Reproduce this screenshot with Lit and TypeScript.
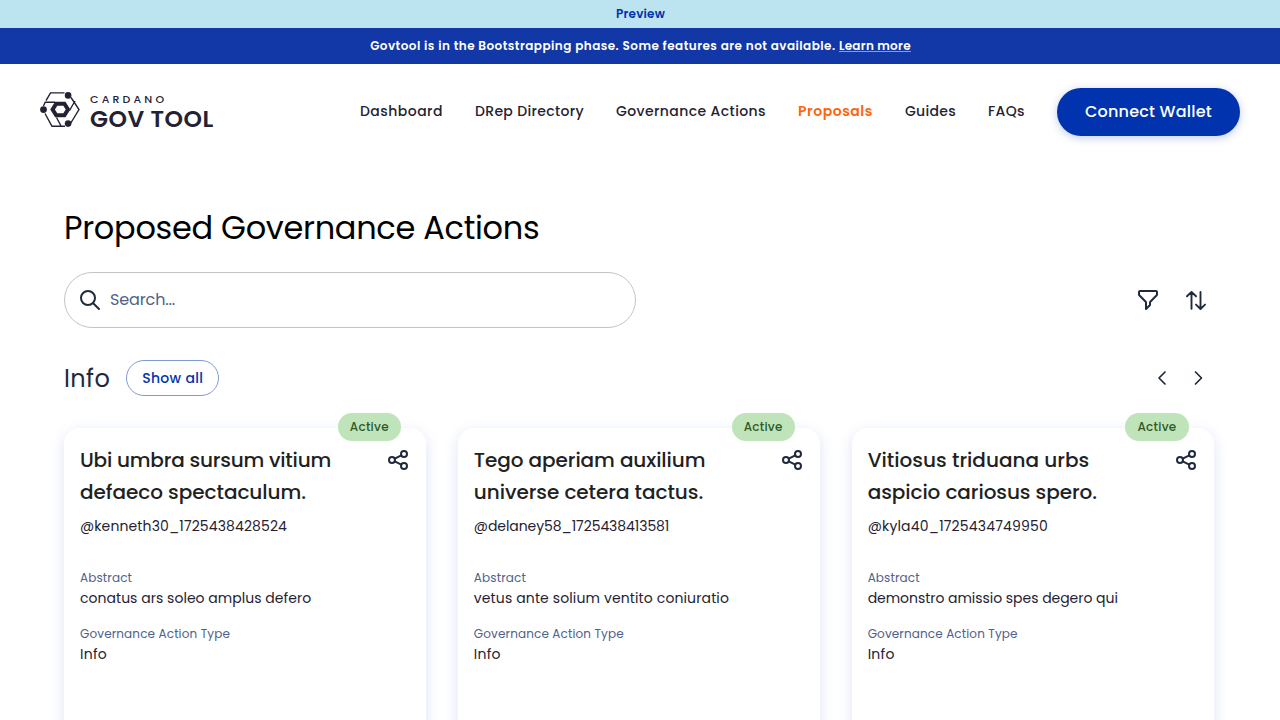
import { LitElement, html, css, svg } from "lit";

interface Line {
  text: string;
  tracking: number;
}

interface Proposal {
  title: Line[];
  author: Line;
  abstract: Line;
}

const NAV: Line[] = [
  { text: "Dashboard", tracking: 0.471 },
  { text: "DRep Directory", tracking: 0.34 },
  { text: "Governance Actions", tracking: 0.404 },
  { text: "Proposals", tracking: 0.537 },
  { text: "Guides", tracking: 0.298 },
  { text: "FAQs", tracking: 0.385 },
];

const PROPOSALS: Proposal[] = [
  {
    title: [{ text: "Ubi umbra sursum vitium", tracking: -0.211 }, { text: "defaeco spectaculum.", tracking: -0.041 }],
    author: { text: "@kenneth30_1725438428524", tracking: 0.116 },
    abstract: { text: "conatus ars soleo amplus defero", tracking: 0.03 },
  },
  {
    title: [{ text: "Tego aperiam auxilium", tracking: -0.08 }, { text: "universe cetera tactus.", tracking: -0.05 }],
    author: { text: "@delaney58_1725438413581", tracking: -0.07 },
    abstract: { text: "vetus ante solium ventito coniuratio", tracking: 0.125 },
  },
  {
    title: [{ text: "Vitiosus triduana urbs", tracking: 0.01 }, { text: "aspicio cariosus spero.", tracking: -0.07 }],
    author: { text: "@kyla40_1725434749950", tracking: 0.18 },
    abstract: { text: "demonstro amissio spes degero qui", tracking: -0.04 },
  },
];

const track = (l: Line) => `letter-spacing:${l.tracking}px`;

const stroked = (paths: unknown, width = 2) => html`
  <svg width="24" height="24" viewBox="0 0 24 24" fill="none" stroke="#212a3d"
    stroke-width=${width} stroke-linecap="round" stroke-linejoin="round">${paths}</svg>`;

const searchIcon = stroked(svg`<circle cx="10" cy="10" r="7"/><path d="M15.200 15.200L21 21"/>`);
const filterIcon = stroked(svg`<path d="M3 4a1 1 0 0 1 1-1h16a1 1 0 0 1 1 1v2.586a1 1 0 0 1-.293.707l-6.414 6.414a1 1 0 0 0-.293.707V17l-4 4v-6.586a1 1 0 0 0-.293-.707L3.293 7.293A1 1 0 0 1 3 6.586V4z"/>`);
const sortIcon = stroked(svg`<path d="M7.500 20.800V4M3 8.300L7.500 3.900L12 8.300M16.500 3.900V20.600M12 16.600L16.500 21L21 16.600"/>`, 1.9);
const leftIcon = stroked(svg`<path d="M15 6l-6 6 6 6"/>`, 1.7);
const rightIcon = stroked(svg`<path d="M9.500 6l6 6-6 6"/>`, 1.7);
const shareIcon = stroked(svg`<circle cx="6" cy="12" r="3"/><circle cx="18" cy="6" r="3"/><circle cx="18" cy="18" r="3"/><path d="M8.684 10.658L15.316 7.342M8.684 13.342L15.316 16.658"/>`);

class GovLogo extends LitElement {
  static styles = css`
    :host { display: flex; align-items: flex-start; gap: 10px; height: 40px; color: #242232; }
    svg { display: block; }
    .words { display: flex; flex-direction: column; gap: 5px; }
    .small { font: 500 11px/14px Poppins, Inter, sans-serif; letter-spacing: 3.15px; white-space: nowrap; }
    .big { font: 600 23.5px/16px Poppins, Inter, sans-serif; letter-spacing: 0.45px; white-space: nowrap; }
  `;
  render() {
    return html`
      <svg width="40" height="36" viewBox="0 0 40 36" fill="none" stroke="#242232" stroke-width="1.400">
        <path d="M24.500 0.900H10.500L6 8.600M3.500 14L5.200 10.200H15M5 21.500L12 34.300H25"/>
        <path d="M31 5.500L39 17.500L30.500 31.500M35 9L29.500 18.500M16.500 25.500L21 34"/>
        <circle cx="28.100" cy="3.400" r="3.300" fill="#242232" stroke="none"/>
        <circle cx="3.500" cy="17.600" r="3.400" fill="#242232" stroke="none"/>
        <circle cx="28.100" cy="31.600" r="3.300" fill="#242232" stroke="none"/>
        <path d="M16.200 11.700H24.400L28 17.500L24.400 23.300H16.200L12.600 17.500Z" stroke-width="4" stroke-linejoin="miter"/>
      </svg>
      <div class="words"><span class="small">CARDANO</span><span class="big">GOV TOOL</span></div>`;
  }
}
customElements.define("gov-logo", GovLogo);

class ProposalCard extends LitElement {
  static properties = { proposal: { attribute: false } };
  declare proposal: Proposal;
  static styles = css`
    :host { display: block; position: relative; height: 420px; box-sizing: border-box; padding: 16px; border-radius: 16px;
      background: #fff; box-shadow: 0 4px 15px 0 #dde3f5; font-family: Poppins, Inter, sans-serif; }
    .badge { position: absolute; top: -15px; right: 25px; height: 28px; padding: 0 12px; border-radius: 14px;
      background: #c0e4ba; color: #2f5a27; font-size: 12px; font-weight: 500; line-height: 28px; letter-spacing: 0.25px; }
    .head { display: flex; justify-content: space-between; align-items: flex-start; }
    h3 { margin: 0; color: #212121; font-size: 20px; font-weight: 500; line-height: 32px; }
    h3 span { display: block; white-space: nowrap; }
    .share { display: flex; padding-top: 4px; }
    .author { margin: 8px 0 32px; color: #242232; font-size: 14px; line-height: 20px; }
    dl { margin: 0; display: flex; flex-direction: column; gap: 16px; }
    dt { color: #506288; font-size: 12px; line-height: 20px; letter-spacing: 0.13px; }
    dd { margin: 0; color: #242232; font-size: 14px; line-height: 20px; }
    .type { letter-spacing: 0.25px; }
  `;
  render() {
    const p = this.proposal;
    return html`
      <span class="badge">Active</span>
      <div class="head">
        <h3>${p.title.map((l) => html`<span style=${track(l)}>${l.text}</span>`)}</h3>
        <span class="share">${shareIcon}</span>
      </div>
      <p class="author" style=${track(p.author)}>${p.author.text}</p>
      <dl>
        <div><dt>Abstract</dt><dd style=${track(p.abstract)}>${p.abstract.text}</dd></div>
        <div><dt>Governance Action Type</dt><dd class="type">Info</dd></div>
      </dl>`;
  }
}
customElements.define("proposal-card", ProposalCard);

class AppRoot extends LitElement {
  static styles = css`
    :host { display: flex; flex-direction: column; height: 720px; overflow: hidden; background: #fff; color: #242232;
      font-family: Poppins, Inter, sans-serif; }
    .preview { flex: none; height: 28px; padding-left: 1px; background: #bce4f0; color: #0033ad; font-size: 12px; font-weight: 600; line-height: 28px; text-align: center; letter-spacing: 0.2px; }
    .notice { flex: none; height: 36px; padding-left: 1px; background: #1237a6; color: #fff; font-size: 12px; font-weight: 600; line-height: 36px; text-align: center; letter-spacing: 0.46px; }
    .notice a { color: inherit; text-decoration: underline; text-decoration-color: #8a9ed6; letter-spacing: 0.283px; }
    header { flex: none; display: flex; align-items: center; justify-content: space-between; height: 96px; padding: 0 40px; }
    nav { display: flex; align-items: center; gap: 32px; font-size: 14px; font-weight: 500; line-height: 20px; white-space: nowrap; }
    nav .current { color: #ff640a; font-weight: 600; }
    .link, .current { padding-bottom: 2px; }
    .connect { height: 48px; padding: 0 28px; border: 0; border-radius: 24px; background: #0033ad; color: #fff;
      font: 500 16px/24px Poppins, Inter, sans-serif; letter-spacing: 0.212px; box-shadow: 0 2px 8px rgba(0, 51, 173, 0.25); }
    main { flex: none; display: flex; flex-direction: column; padding: 42px 64px 0; }
    h1 { margin: 0; color: #000; font-size: 32px; font-weight: 400; line-height: 52px; letter-spacing: -0.3px; }
    .tools { display: flex; align-items: center; justify-content: space-between; margin-top: 18px; }
    .search { display: flex; align-items: center; gap: 8px; box-sizing: border-box; width: 572px; height: 56px; padding: 0 13px;
      border: 1px solid #c4c4c4; border-radius: 28px; color: #506288; font-size: 16px; letter-spacing: -0.12px; }
    .search span { padding-bottom: 2px; }
    .icons { display: flex; gap: 24px; padding-right: 8px; }
    .section { display: flex; align-items: center; height: 36px; margin-top: 32px; }
    h2 { margin: 0 16px 0 0; padding-top: 1px; color: #212a3d; font-size: 24px; font-weight: 400; line-height: 36px; letter-spacing: 0.42px; }
    .all { box-sizing: border-box; height: 36px; padding: 0 15px; border: 1px solid #7f99d6; border-radius: 18px; background: #fff;
      color: #0033ad; font: 500 14px/24px Poppins, Inter, sans-serif; letter-spacing: 0.31px; }
    .arrows { display: flex; gap: 12px; margin-left: auto; padding-right: 6px; }
    .cards { display: grid; grid-template-columns: repeat(3, minmax(0, 1fr)); gap: 32px; width: 1149.5px; margin-top: 32px; }
    svg { display: block; }
  `;
  render() {
    return html`
      <div class="preview">Preview</div>
      <div class="notice">Govtool is in the Bootstrapping phase. Some features are not available. <a>Learn more</a></div>
      <header>
        <gov-logo></gov-logo>
        <nav>
          ${NAV.map((n) => html`<span class=${n.text === "Proposals" ? "current" : "link"} style=${track(n)}>${n.text}</span>`)}
          <button class="connect">Connect Wallet</button>
        </nav>
      </header>
      <main>
        <h1>Proposed Governance Actions</h1>
        <div class="tools">
          <div class="search">${searchIcon}<span>Search...</span></div>
          <div class="icons">${filterIcon}${sortIcon}</div>
        </div>
        <div class="section">
          <h2>Info</h2><button class="all">Show all</button>
          <div class="arrows">${leftIcon}${rightIcon}</div>
        </div>
        <div class="cards">${PROPOSALS.map((p) => html`<proposal-card .proposal=${p}></proposal-card>`)}</div>
      </main>`;
  }
}
customElements.define("app-root", AppRoot);
